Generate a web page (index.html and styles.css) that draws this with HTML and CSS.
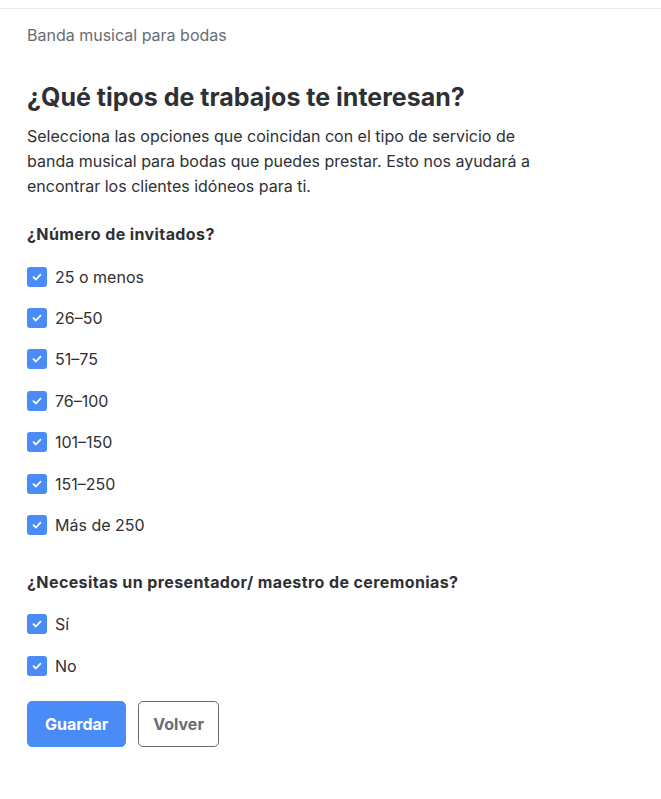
FILE: index.html
```html
<!DOCTYPE html>
<html lang="es">
<head>
    <meta charset="UTF-8">
    <meta name="viewport" content="width=device-width, initial-scale=1.0">
    <title>Banda musical para bodas</title>
    <link rel="stylesheet" href="styles.css">
</head>
<body>
    <div class="topbar"></div>

    <main class="container">
        <div class="eyebrow">Banda musical para bodas</div>
        <h1 class="title">¿Qué tipos de trabajos te interesan?</h1>
        <p class="intro">Selecciona las opciones que coincidan con el tipo de servicio de banda musical para bodas que puedes prestar. Esto nos ayudará a encontrar los clientes idóneos para ti.</p>

        <section class="question">
            <h2 class="question-title">¿Número de invitados?</h2>
            <ul class="options">
                <li class="option"><span class="check"><svg width="12" height="12" viewBox="0 0 12 12"><path d="M2.5 6.2l2.4 2.3 4.6-4.8"/></svg></span>25 o menos</li>
                <li class="option"><span class="check"><svg width="12" height="12" viewBox="0 0 12 12"><path d="M2.5 6.2l2.4 2.3 4.6-4.8"/></svg></span>26–50</li>
                <li class="option"><span class="check"><svg width="12" height="12" viewBox="0 0 12 12"><path d="M2.5 6.2l2.4 2.3 4.6-4.8"/></svg></span>51–75</li>
                <li class="option"><span class="check"><svg width="12" height="12" viewBox="0 0 12 12"><path d="M2.5 6.2l2.4 2.3 4.6-4.8"/></svg></span>76–100</li>
                <li class="option"><span class="check"><svg width="12" height="12" viewBox="0 0 12 12"><path d="M2.5 6.2l2.4 2.3 4.6-4.8"/></svg></span>101–150</li>
                <li class="option"><span class="check"><svg width="12" height="12" viewBox="0 0 12 12"><path d="M2.5 6.2l2.4 2.3 4.6-4.8"/></svg></span>151–250</li>
                <li class="option"><span class="check"><svg width="12" height="12" viewBox="0 0 12 12"><path d="M2.5 6.2l2.4 2.3 4.6-4.8"/></svg></span>Más de 250</li>
            </ul>
        </section>

        <section class="question">
            <h2 class="question-title">¿Necesitas un presentador/ maestro de ceremonias?</h2>
            <ul class="options">
                <li class="option"><span class="check"><svg width="12" height="12" viewBox="0 0 12 12"><path d="M2.5 6.2l2.4 2.3 4.6-4.8"/></svg></span>Sí</li>
                <li class="option"><span class="check"><svg width="12" height="12" viewBox="0 0 12 12"><path d="M2.5 6.2l2.4 2.3 4.6-4.8"/></svg></span>No</li>
            </ul>
        </section>

        <div class="actions">
            <button class="btn btn-primary">Guardar</button>
            <button class="btn btn-secondary">Volver</button>
        </div>
    </main>
</body>
</html>
```

FILE: styles.css
```css
:root {
    --color-text: #2f3033;
    --color-muted: #676d73;
    --color-primary: #4a8cf7;
    --color-line: #e9eaeb;
}

* {
    margin: 0;
    padding: 0;
    box-sizing: border-box;
}

body {
    font-family: Inter, "Open Sans", sans-serif;
    color: var(--color-text);
    background: #fff;
}

.topbar {
    height: 9px;
    border-bottom: 1px solid var(--color-line);
}

.container {
    padding: 15px 27px 40px;
    max-width: 600px;
}

.eyebrow {
    color: var(--color-muted);
    font-size: 16px;
    line-height: 22px;
}

.title {
    font-size: 25px;
    font-weight: 700;
    line-height: 32px;
    margin-top: 35px;
}

.intro {
    font-size: 16px;
    line-height: 25px;
    margin-top: 11px;
    max-width: 530px;
}

.question {
    margin-top: 23px;
}

.question + .question {
    margin-top: 24px;
}

.question-title {
    font-size: 16px;
    font-weight: 700;
    line-height: 24px;
    letter-spacing: 0.4px;
}

.options {
    list-style: none;
    margin-top: 10px;
}

.option {
    display: flex;
    align-items: center;
    gap: 8px;
    height: 41.4px;
    font-size: 16px;
}

.check {
    width: 20px;
    height: 20px;
    border-radius: 3px;
    background: var(--color-primary);
    display: flex;
    align-items: center;
    justify-content: center;
}

.check path {
    fill: none;
    stroke: #fff;
    stroke-width: 1.8;
    stroke-linecap: round;
    stroke-linejoin: round;
}

.actions {
    display: flex;
    gap: 12px;
    margin-top: 14px;
}

.btn {
    font-family: inherit;
    font-size: 16px;
    font-weight: 700;
    height: 46px;
    padding: 0 17px;
    border-radius: 5px;
    cursor: pointer;
}

.btn-primary {
    background: var(--color-primary);
    color: #fff;
    border: 1px solid var(--color-primary);
}

.btn-secondary {
    padding: 0 14px;
    background: #fff;
    color: var(--color-muted);
    border: 1px solid var(--color-muted);
}
```
